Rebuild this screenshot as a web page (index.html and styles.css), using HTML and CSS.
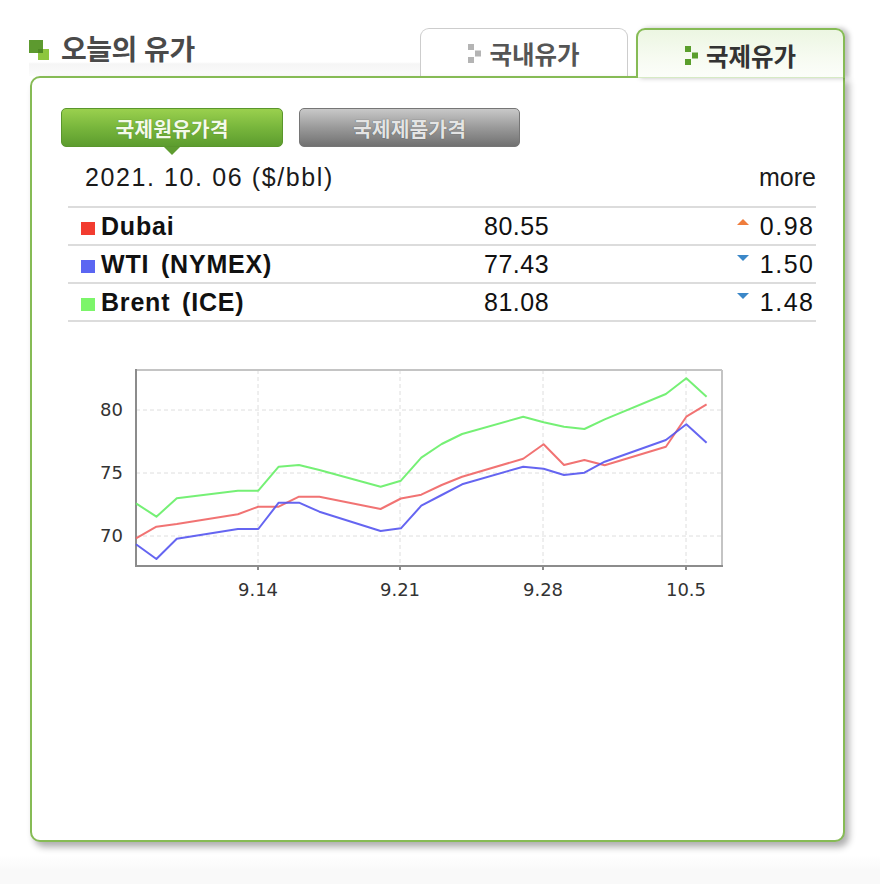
FILE: index.html
```html
<!DOCTYPE html>
<html lang="ko">
<head>
<meta charset="utf-8">
<title>오늘의 유가</title>
<link rel="stylesheet" href="styles.css">
</head>
<body>
<div class="widget">
  <div class="head">
    <div class="title">
      <svg class="title-ico" width="21" height="21" viewBox="0 0 21 21" aria-hidden="true">
        <rect x="0" y="0" width="14" height="13" fill="#5d9a2f"/>
        <rect x="9" y="9" width="11" height="11" fill="#8dc63f"/>
        <rect x="9" y="9" width="5" height="4" fill="#4f8a25"/>
      </svg>
      <h1 class="title-text">오늘의 유가</h1>
    </div>
    <div class="tabs">
      <div class="tab">
        <svg class="tab-ico" width="13" height="19" viewBox="0 0 13 19" aria-hidden="true">
          <rect x="0" y="0" width="6" height="6" fill="#b4b4b4"/>
          <rect x="7" y="6.5" width="6" height="6" fill="#b4b4b4"/>
          <rect x="0" y="13" width="6" height="6" fill="#b4b4b4"/>
        </svg>
        <span>국내유가</span>
      </div>
      <div class="tab on">
        <svg class="tab-ico" width="13" height="19" viewBox="0 0 13 19" aria-hidden="true">
          <rect x="0" y="0" width="6" height="6" fill="#5a9e2c"/>
          <rect x="7" y="6.5" width="6" height="6" fill="#5a9e2c"/>
          <rect x="0" y="13" width="6" height="6" fill="#5a9e2c"/>
        </svg>
        <span>국제유가</span>
      </div>
    </div>
  </div>

  <div class="box">
    <div class="btns">
      <div class="btn green">국제원유가격</div>
      <div class="btn gray">국제제품가격</div>
    </div>

    <div class="date">
      <span class="d">2021. 10. 06 ($/bbl)</span>
      <span class="more">more</span>
    </div>

    <div class="table">
      <div class="row">
        <span class="name"><i class="mk red"></i>Dubai</span>
        <span class="val">80.55</span>
        <span class="chg"><i class="tri up"></i><span class="num">0.98</span></span>
      </div>
      <div class="row">
        <span class="name"><i class="mk blue"></i>WTI (NYMEX)</span>
        <span class="val">77.43</span>
        <span class="chg"><i class="tri dn"></i><span class="num">1.50</span></span>
      </div>
      <div class="row">
        <span class="name"><i class="mk green"></i>Brent (ICE)</span>
        <span class="val">81.08</span>
        <span class="chg"><i class="tri dn"></i><span class="num">1.48</span></span>
      </div>
    </div>

    <svg class="chart" width="660" height="250" viewBox="0 0 660 250">
      <g stroke="#dedede" stroke-width="1" stroke-dasharray="4 3" fill="none">
        <line x1="56" y1="50" x2="642" y2="50"/>
        <line x1="56" y1="113" x2="642" y2="113"/>
        <line x1="56" y1="176" x2="642" y2="176"/>
        <line x1="178" y1="10" x2="178" y2="206"/>
        <line x1="320" y1="10" x2="320" y2="206"/>
        <line x1="463" y1="10" x2="463" y2="206"/>
        <line x1="606" y1="10" x2="606" y2="206"/>
      </g>
      <g stroke="#c4c4c4" stroke-width="2" fill="none">
        <line x1="56" y1="10" x2="642" y2="10"/>
        <line x1="642" y1="10" x2="642" y2="206"/>
      </g>
      <g stroke="#8c8c8c" stroke-width="2" fill="none">
        <line x1="56" y1="9" x2="56" y2="207"/>
        <line x1="55" y1="206" x2="643" y2="206"/>
        <line x1="178" y1="206" x2="178" y2="210"/>
        <line x1="320" y1="206" x2="320" y2="210"/>
        <line x1="463" y1="206" x2="463" y2="210"/>
        <line x1="606" y1="206" x2="606" y2="210"/>
      </g>
      <g fill="none" stroke-width="2" stroke-linejoin="round" stroke-opacity="0.9">
        <polyline stroke="#66ee66" points="56,143.3 76.4,156.7 96.8,138.3 157.9,130.7 178.3,130.7 198.7,106.7 219,105 239.4,110 300.6,126.7 320.9,120.7 341.3,97.7 361.7,84 382.1,74 443.2,56.7 463.6,62.3 484,66.7 504.4,69 524.7,59.3 585.9,34 606.3,18.3 626.6,36.7"/>
        <polyline stroke="#f06464" points="56,178.3 76.4,166.7 96.8,164 157.9,154.3 178.3,146.7 198.7,146.7 219,136.7 239.4,136.7 300.6,149 320.9,138.5 341.3,134.7 361.7,125 382.1,116.7 443.2,98.7 463.6,84.3 484,105 504.4,100 524.7,105.3 585.9,86.7 606.3,56.7 626.6,44.3"/>
        <polyline stroke="#5454f0" points="56,184.3 76.4,199 96.8,178.7 157.9,169 178.3,169 198.7,142.7 219,142.7 239.4,151.7 300.6,171 320.9,168.3 341.3,145.7 361.7,135 382.1,124.3 443.2,106.7 463.6,108.7 484,115 504.4,112.7 524.7,101.7 585.9,80 606.3,64.3 626.6,82.7"/>
      </g>
      <g class="axis-y" text-anchor="end">
        <text x="43" y="56">80</text>
        <text x="43" y="119">75</text>
        <text x="43" y="182">70</text>
      </g>
      <g class="axis-x" text-anchor="middle">
        <text x="178" y="236">9.14</text>
        <text x="320" y="236">9.21</text>
        <text x="463" y="236">9.28</text>
        <text x="606" y="236">10.5</text>
      </g>
    </svg>
  </div>
</div>
</body>
</html>
```

FILE: styles.css
```css
html {
  background: #ffffff;
}

body {
  margin: 0;
  background: linear-gradient(to bottom, #ffffff 0, #ffffff 855px, #f9f9f9 870px, #f9f9f9 100%);
  min-height: 884px;
  font-family: "Liberation Sans", "Noto Sans CJK KR", sans-serif;
  color: #111;
}

.widget {
  width: 816px;
  margin: 28px 0 0 29px;
}

/* header */
.head {
  display: flex;
  height: 48px;
}

.title {
  flex: 1;
  display: flex;
  align-items: flex-start;
  background: linear-gradient(to bottom, #ffffff 0, #ffffff 34px, #f5f5f5 36px, #fcfcfc 48px);
}

.title-ico {
  display: block;
  margin-top: 12px;
  flex: none;
}

.title-text {
  margin: 4px 0 0 11px;
  font-family: "Noto Sans CJK KR", sans-serif;
  font-size: 28px;
  line-height: 32px;
  font-weight: 700;
  color: #4a4a4a;
  letter-spacing: -0.5px;
}

.tabs {
  display: flex;
  gap: 8px;
  align-items: flex-start;
}

.tab {
  box-sizing: border-box;
  width: 208px;
  height: 48px;
  border: 1.5px solid #cdcdcd;
  border-bottom: none;
  border-radius: 9px 9px 0 0;
  background: #ffffff;
  display: flex;
  align-items: center;
  justify-content: center;
  gap: 8px;
  font-family: "Noto Sans CJK KR", sans-serif;
  font-weight: 700;
  font-size: 24.5px;
  color: #555;
  padding-top: 2px;
}

.tab-ico {
  display: block;
  flex: none;
}

.tab.on {
  width: 209px;
  height: 50px;
  margin-bottom: -2px;
  border: 2px solid #86bb55;
  border-bottom: none;
  background: linear-gradient(to bottom, #ecf6e2 0, #f7fbf2 60%, #fcfefa 100%);
  color: #333;
  position: relative;
  z-index: 2;
  box-shadow: 4px 0 5px rgba(0, 0, 0, 0.25), inset 0 -1px 0 #d6eac4;
}

/* box */
.box {
  box-sizing: border-box;
  margin-left: 1px;
  height: 766px;
  border: 2px solid #86bb55;
  border-radius: 10px 0 10px 10px;
  background: #ffffff;
  box-shadow: 4px 5px 7px rgba(0, 0, 0, 0.32);
  position: relative;
}

.btns {
  display: flex;
  gap: 16px;
  margin: 30px 0 0 29px;
}

.btn {
  box-sizing: border-box;
  width: 222px;
  height: 39px;
  border-radius: 5px;
  display: flex;
  align-items: center;
  justify-content: center;
  font-family: "Noto Sans CJK KR", sans-serif;
  font-weight: 700;
  font-size: 20.5px;
  position: relative;
}

.btn.green {
  background: linear-gradient(to bottom, #9ad04e 0, #78b63c 50%, #5c9c2e 100%);
  border: 1px solid #5a962c;
  color: #f3fae9;
  text-shadow: 0 0 1px rgba(40, 80, 10, 0.6);
}

.btn.green::after {
  content: "";
  position: absolute;
  left: 50%;
  bottom: -9px;
  transform: translateX(-50%);
  border-left: 8px solid transparent;
  border-right: 8px solid transparent;
  border-top: 8px solid #5e9c30;
}

.btn.gray {
  width: 221px;
  background: linear-gradient(to bottom, #c8c8c8 0, #9a9a9a 50%, #717171 100%);
  border: 1px solid #767676;
  color: #e4e4e4;
  text-shadow: 0 0 1px rgba(0, 0, 0, 0.6);
}

/* date row */
.date {
  display: flex;
  justify-content: space-between;
  margin: 15px 27px 0 53px;
  font-size: 25px;
  line-height: 30px;
  color: #1a1a1a;
}

.date .d {
  letter-spacing: 1.6px;
}

/* table */
.table {
  margin: 14px 27px 0 36px;
  border-bottom: 2px solid #dcdcdc;
}

.row {
  box-sizing: border-box;
  display: grid;
  grid-template-columns: 403px 1fr 76px;
  height: 38px;
  border-top: 2px solid #dcdcdc;
  padding: 0 3px 0 13px;
  font-size: 25px;
  line-height: 36px;
  color: #111;
}

.name {
  font-weight: 700;
  letter-spacing: 0.8px;
  word-spacing: 4px;
  white-space: nowrap;
}

.mk {
  display: inline-block;
  width: 14px;
  height: 13px;
  margin-right: 6px;
  vertical-align: baseline;
}

.mk.red { background: #f23c30; }
.mk.blue { background: #5b66f2; }
.mk.green { background: #7cf56a; }

.val {
  letter-spacing: 0.5px;
}

.chg {
  display: grid;
  grid-template-columns: 12px 1fr;
}

.tri {
  display: block;
  width: 0;
  height: 0;
  align-self: start;
  border-left: 6px solid transparent;
  border-right: 6px solid transparent;
}

.tri.up {
  margin-top: 11px;
  border-bottom: 6px solid #ef7d3c;
}

.tri.dn {
  margin-top: 9px;
  border-top: 6px solid #3b87c8;
}

.num {
  text-align: right;
  letter-spacing: 1.5px;
  margin-right: -1.5px;
}

/* chart */
.chart {
  display: block;
  margin: 38px 0 0 48px;
}

.axis-y text,
.axis-x text {
  font-family: "DejaVu Sans", sans-serif;
  font-size: 18px;
  fill: #333;
}
```
